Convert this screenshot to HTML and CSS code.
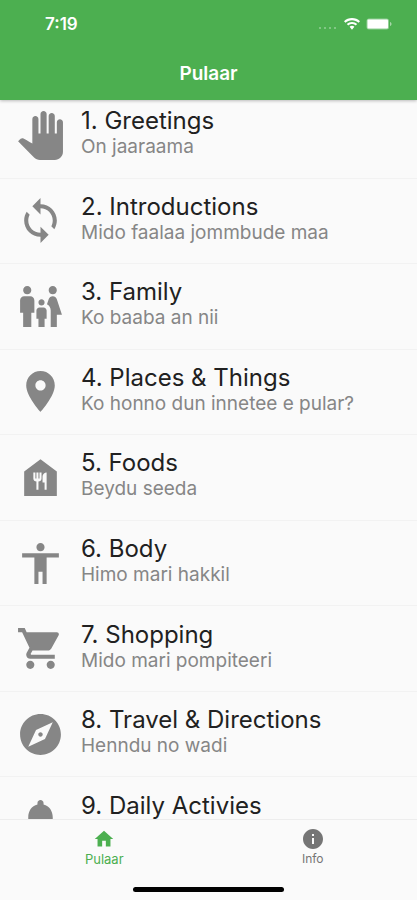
FILE: index.html
```html
<!DOCTYPE html>
<html lang="ff">
<head>
<meta charset="utf-8">
<meta name="viewport" content="width=device-width, initial-scale=1">
<title>Pulaar</title>
<link rel="stylesheet" href="styles.css">
</head>
<body>
<div class="app">
  <header class="header">
    <div class="status">
      <span class="time">7:19</span>
      <div class="status-icons">
        <svg class="signal" viewBox="0 0 20 4" aria-hidden="true"><circle cx="2" cy="2" r="1"/><circle cx="7" cy="2" r="1"/><circle cx="12" cy="2" r="1"/><circle cx="17" cy="2" r="1"/></svg>
        <svg class="wifi" viewBox="0 0 16 12" aria-hidden="true"><path d="M8 0C4.900 0 2.100 1.200 0 3.200l1.500 1.600C3.200 3.100 5.500 2.200 8 2.200s4.800.9 6.500 2.600L16 3.200C13.900 1.200 11.100 0 8 0zM8 3.900c-2 0-3.800.8-5.200 2.100l1.500 1.600C5.300 6.600 6.600 6.100 8 6.100s2.700.5 3.700 1.500L13.200 6C11.800 4.700 10 3.900 8 3.900zM8 7.700c-.9 0-1.800.4-2.400 1L8 11.800l2.400-3.100c-.6-.6-1.500-1-2.400-1z"/></svg>
        <svg class="battery" viewBox="0 0 26 12" aria-hidden="true"><rect class="shell" x=".5" y=".5" width="22.500" height="11" rx="2.500"/><rect x="1.500" y="1.500" width="20.500" height="9" rx="1"/><path class="cap" d="M24 4v4c1-.3 1.500-1.100 1.500-2S25 4.300 24 4z"/></svg>
      </div>
    </div>
    <h1 class="title">Pulaar</h1>
  </header>
  <main class="content">
    <ul class="list">
      <li><a class="row" href="#greetings">
        <svg class="icon" viewBox="0 0 24 24" aria-hidden="true"><path d="M23 5.500V20c0 2.200-1.800 4-4 4h-7.300c-1.080 0-2.100-.43-2.850-1.190L1 14.830s1.260-1.230 1.300-1.250c.22-.19.49-.29.79-.29.22 0 .42.06.6.16.04.01 4.310 2.460 4.310 2.460V4c0-.83.67-1.500 1.500-1.500S11 3.170 11 4v7h1V1.500c0-.83.67-1.500 1.500-1.500S15 .67 15 1.500V11h1V2.500c0-.83.67-1.500 1.500-1.500s1.500.67 1.500 1.500V11h1V5.500c0-.83.67-1.500 1.500-1.500s1.500.67 1.500 1.500z"/></svg>
        <span class="text"><span class="name">1. Greetings</span><span class="phrase">On jaaraama</span></span></a></li>
      <li><a class="row" href="#introductions">
        <svg class="icon" viewBox="0 0 24 24" aria-hidden="true"><path d="M12 4V1L8 5l4 4V6c3.310 0 6 2.690 6 6 0 1.010-.25 1.970-.7 2.800l1.460 1.460C19.540 15.030 20 13.570 20 12c0-4.420-3.580-8-8-8zm0 14c-3.310 0-6-2.690-6-6 0-1.010.25-1.970.7-2.800L5.240 7.740C4.460 8.970 4 10.430 4 12c0 4.420 3.580 8 8 8v3l4-4-4-4v3z"/></svg>
        <span class="text"><span class="name">2. Introductions</span><span class="phrase">Mido faalaa jommbude maa</span></span></a></li>
      <li><a class="row" href="#family">
        <svg class="icon" viewBox="0 0 24 24" aria-hidden="true"><path d="M16 4c0-1.110.89-2 2-2s2 .89 2 2-.89 2-2 2-2-.89-2-2zm4 18v-6h2.500l-2.540-7.630C19.680 7.550 18.920 7 18.060 7h-.12c-.86 0-1.630.55-1.900 1.370l-.86 2.580c1.080.6 1.820 1.730 1.820 3.050v8h3zm-7.500-10.500c.83 0 1.500-.67 1.500-1.500s-.67-1.500-1.500-1.500S11 9.170 11 10s.67 1.500 1.500 1.500zM5.500 6c1.110 0 2-.89 2-2s-.89-2-2-2-2 .89-2 2 .89 2 2 2zm2 16v-7H9V9c0-1.100-.9-2-2-2H4c-1.100 0-2 .9-2 2v6h1.500v7h4zm6.500 0v-4h1v-4c0-.82-.68-1.500-1.500-1.500h-2c-.82 0-1.500.68-1.500 1.500v4h1v4h3z"/></svg>
        <span class="text"><span class="name">3. Family</span><span class="phrase">Ko baaba an nii</span></span></a></li>
      <li><a class="row" href="#places">
        <svg class="icon" viewBox="0 0 24 24" aria-hidden="true"><path d="M12 2C8.130 2 5 5.130 5 9c0 5.250 7 13 7 13s7-7.750 7-13c0-3.870-3.130-7-7-7zm0 9.500c-1.380 0-2.500-1.120-2.500-2.500s1.120-2.500 2.500-2.500 2.500 1.120 2.500 2.500-1.120 2.500-2.500 2.500z"/></svg>
        <span class="text"><span class="name">4. Places &amp; Things</span><span class="phrase">Ko honno dun innetee e pular?</span></span></a></li>
      <li><a class="row" href="#foods">
        <svg class="icon" viewBox="0 0 24 24" aria-hidden="true"><path fill-rule="evenodd" d="M12 3L4 9v12h16V9L12 3zM12.500 12.500c0 .83-.67 1.500-1.500 1.500v4h-1v-4c-.83 0-1.500-.67-1.500-1.500v-3h1v3h.5v-3h1v3h.5v-3h1v3zM15 18h-1v-3.500h-1v-3c0-1.100.9-2 2-2V18z"/></svg>
        <span class="text"><span class="name">5. Foods</span><span class="phrase">Beydu seeda</span></span></a></li>
      <li><a class="row" href="#body">
        <svg class="icon" viewBox="0 0 24 24" aria-hidden="true"><path d="M12 2c1.100 0 2 .9 2 2s-.9 2-2 2-2-.9-2-2 .9-2 2-2zm9 7h-6v13h-2v-6h-2v6H9V9H3V7h18v2z"/></svg>
        <span class="text"><span class="name">6. Body</span><span class="phrase">Himo mari hakkil</span></span></a></li>
      <li><a class="row" href="#shopping">
        <svg class="icon" viewBox="0 0 24 24" aria-hidden="true"><path d="M7 18c-1.100 0-1.990.9-1.990 2S5.900 22 7 22s2-.9 2-2-.9-2-2-2zM1 2v2h2l3.600 7.590-1.350 2.450c-.16.28-.25.61-.25.96 0 1.100.9 2 2 2h12v-2H7.420c-.14 0-.25-.11-.25-.25l.03-.12.9-1.630h7.450c.75 0 1.410-.41 1.750-1.030l3.580-6.490c.08-.14.12-.31.12-.48 0-.55-.45-1-1-1H5.210l-.94-2H1zm16 16c-1.100 0-1.990.9-1.990 2s.89 2 1.990 2 2-.9 2-2-.9-2-2-2z"/></svg>
        <span class="text"><span class="name">7. Shopping</span><span class="phrase">Mido mari pompiteeri</span></span></a></li>
      <li><a class="row" href="#travel">
        <svg class="icon" viewBox="0 0 24 24" aria-hidden="true"><path d="M12 10.900c-.61 0-1.100.49-1.100 1.100s.49 1.100 1.100 1.100c.61 0 1.100-.49 1.100-1.100s-.49-1.100-1.100-1.100zM12 2C6.480 2 2 6.480 2 12s4.480 10 10 10 10-4.480 10-10S17.520 2 12 2zm2.190 12.190L6 18l3.810-8.190L18 6l-3.810 8.190z"/></svg>
        <span class="text"><span class="name">8. Travel &amp; Directions</span><span class="phrase">Henndu no wadi</span></span></a></li>
      <li><a class="row" href="#daily">
        <svg class="icon" viewBox="0 0 24 24" aria-hidden="true"><path d="M12 22c1.100 0 2-.9 2-2h-4c0 1.100.89 2 2 2zm6-6v-5c0-3.070-1.640-5.640-4.500-6.320V4c0-.83-.67-1.500-1.500-1.500s-1.500.67-1.500 1.500v.68C7.630 5.360 6 7.920 6 11v5l-2 2v1h16v-1l-2-2z"/></svg>
        <span class="text"><span class="name">9. Daily Activies</span></span></a></li>
    </ul>
  </main>
  <footer class="footer">
    <nav class="tabs">
      <a class="tab active" href="#pulaar">
        <svg viewBox="-1 -1 26 26" aria-hidden="true"><path d="M10 20v-6h4v6h5v-8h3L12 3 2 12h3v8z"/></svg>
        <span>Pulaar</span></a>
      <a class="tab" href="#info">
        <svg viewBox="0 0 24 24" aria-hidden="true"><path d="M12 2C6.480 2 2 6.480 2 12s4.480 10 10 10 10-4.480 10-10S17.520 2 12 2zm1 15h-2v-6h2v6zm0-8h-2V7h2v2z"/></svg>
        <span>Info</span></a>
    </nav>
    <div class="home-bar"></div>
  </footer>
</div>
</body>
</html>
```
FILE: styles.css
```css
* { box-sizing: border-box; }

body {
  margin: 0;
  background: #fafafa;
  color: #212121;
  font-family: Inter, "Liberation Sans", sans-serif;
}

a { color: inherit; text-decoration: none; }

.app {
  display: flex;
  flex-direction: column;
  height: 100vh;
}

.header {
  flex: none;
  z-index: 1;
  background: #4caf50;
  color: #fff;
  box-shadow: 0 1px 3px rgba(0, 0, 0, .25);
}

.status {
  display: flex;
  align-items: center;
  justify-content: space-between;
  height: 48px;
  padding: 0 25px 0 45px;
}

.time { font-size: 17px; font-weight: 600; }

.status-icons { display: flex; align-items: center; gap: 6px; fill: #fff; }
.signal { width: 20px; height: 4px; margin-top: 8px; opacity: .4; }
.wifi { width: 16px; height: 12px; }
.battery { width: 26px; height: 12px; }
.shell { opacity: .4; }
.cap { opacity: .5; }

.title {
  margin: 0;
  font-size: 19px;
  font-weight: 600;
  line-height: 52px;
  text-align: center;
}

.content {
  flex: 1;
  min-height: 0;
  overflow: hidden;
}

.list {
  display: grid;
  grid-template-rows: repeat(9, 1fr);
  height: 770px;
  margin: -7px 0 0;
  padding: 0;
  list-style: none;
}

.list li { border-bottom: 1px solid #f2f2f2; }

.row {
  display: flex;
  align-items: center;
  gap: 16px;
  height: 100%;
  padding: 0 16px;
}

.icon { flex: none; width: 49px; height: 49px; fill: #868686; }

.text {
  display: flex;
  flex-direction: column;
  height: 56px;
  white-space: nowrap;
}

.name { font-size: 24px; line-height: 28px; }
.phrase { color: #868686; font-size: 19px; line-height: 24px; }

.footer {
  flex: none;
  height: 81px;
  border-top: 1px solid #ededed;
}

.tabs { display: flex; height: 67px; }

.tab {
  display: flex;
  flex: 1;
  flex-direction: column;
  align-items: center;
  padding-top: 7px;
  color: #757575;
  font-size: 12px;
  line-height: 16px;
}

.tab svg { width: 24px; height: 24px; fill: currentColor; }
.tab.active { color: #4caf50; font-size: 13px; }

.home-bar {
  width: 36%;
  height: 5px;
  margin: 0 auto;
  border-radius: 3px;
  background: #000;
}
```
